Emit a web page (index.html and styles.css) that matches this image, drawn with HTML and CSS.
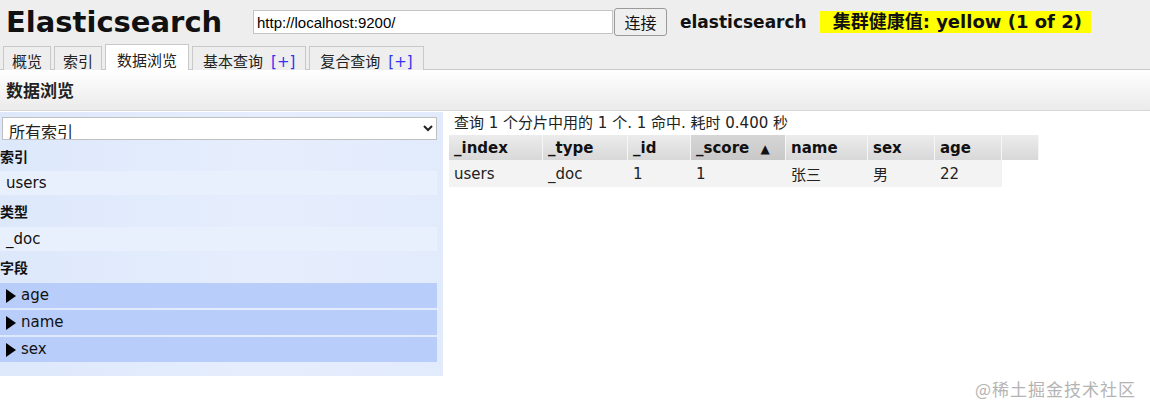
FILE: index.html
```html
<!DOCTYPE html>
<html lang="zh">
<head>
<meta charset="utf-8">
<title>Elasticsearch</title>
<link rel="stylesheet" href="styles.css">
</head>
<body>
<div class="header">
  <div class="top">
    <h1 class="logo">Elasticsearch</h1>
    <input class="url" type="text" value="http://localhost:9200/">
    <button class="connect">连接</button>
    <span class="cluster">elasticsearch</span>
    <span class="health">集群健康值: yellow (1 of 2)</span>
  </div>
  <div class="tabs">
    <div class="tab">概览</div>
    <div class="tab">索引</div>
    <div class="tab active">数据浏览</div>
    <div class="tab wide">基本查询<span class="plus">[+]</span></div>
    <div class="tab wide">复合查询<span class="plus">[+]</span></div>
  </div>
</div>
<div class="infobar">数据浏览</div>
<div class="main">
  <div class="side">
    <select class="idxsel"><option>所有索引</option></select>
    <div class="label">索引</div>
    <div class="row">users</div>
    <div class="label">类型</div>
    <div class="row">_doc</div>
    <div class="label">字段</div>
    <div class="field"><span class="tri"></span>age</div>
    <div class="field"><span class="tri"></span>name</div>
    <div class="field"><span class="tri"></span>sex</div>
  </div>
  <div class="results">
    <div class="summary">查询 1 个分片中用的 1 个. 1 命中. 耗时 0.400 秒</div>
    <table class="grid">
      <thead>
        <tr>
          <th class="c-index">_index</th>
          <th class="c-type">_type</th>
          <th class="c-id">_id</th>
          <th class="c-score sorted">_score <span class="arrow">▲</span></th>
          <th class="c-name">name</th>
          <th class="c-sex">sex</th>
          <th class="c-age">age</th>
          <th class="c-extra"></th>
        </tr>
      </thead>
      <tbody>
        <tr>
          <td>users</td>
          <td>_doc</td>
          <td>1</td>
          <td>1</td>
          <td>张三</td>
          <td>男</td>
          <td>22</td>
          <td class="blank"></td>
        </tr>
      </tbody>
    </table>
  </div>
</div>
<div class="watermark">@稀土掘金技术社区</div>
</body>
</html>
```

FILE: styles.css
```css
html, body {
  margin: 0;
  padding: 0;
  background: #fff;
}
body {
  font-family: "DejaVu Sans", "Noto Sans CJK SC", sans-serif;
  font-size: 15px;
  color: #111;
  position: relative;
  min-height: 413px;
}
.header {
  background: #eeeeee;
  border-bottom: 1px solid #c8c8c8;
}
.top {
  height: 44px;
  display: flex;
  align-items: center;
  padding-left: 6px;
}
.logo {
  margin: 0;
  font-size: 29px;
  font-weight: bold;
  width: 247px;
  letter-spacing: 0;
  line-height: 1;
  padding-top: 1px;
}
.url {
  width: 360px;
  height: 24px;
  box-sizing: border-box;
  border: 1px solid #c4c4c4;
  padding: 0 3px;
  font-family: "Liberation Sans", "Noto Sans CJK SC", sans-serif;
  font-size: 15px;
  color: #000;
  background: #fff;
  margin: 0;
}
.connect {
  height: 28px;
  width: 53px;
  margin: 0 0 0 1px;
  border: 1px solid #9a9a9a;
  border-radius: 3px;
  background: #efefef;
  font-family: "Noto Sans CJK SC", sans-serif;
  font-size: 16px;
  color: #111;
  padding: 0;
}
.cluster {
  margin-left: 13px;
  font-weight: bold;
  font-size: 17px;
}
.health {
  margin-left: 13px;
  background: #ffff00;
  font-weight: bold;
  font-size: 18px;
  padding: 0 13px 0 13px;
  height: 22px;
  line-height: 22px;
  width: 245px;
  white-space: nowrap;
}
.tabs {
  display: flex;
  padding-left: 3px;
  gap: 3px;
  height: 25px;
  align-items: flex-end;
}
.tab {
  height: 24px;
  box-sizing: border-box;
  border: 1px solid #c8c8c8;
  border-bottom: none;
  background: #eeeeee;
  padding: 3px 8px 0 8px;
  font-family: "Noto Sans CJK SC", sans-serif;
  font-size: 15px;
  line-height: 21px;
  color: #222;
  margin-bottom: -1px;
  white-space: nowrap;
}
.tab.active {
  background: #fff;
  height: 26px;
  padding: 4px 11px 0 11px;
  position: relative;
}
.tab.wide {
  padding-left: 10px;
  padding-right: 10px;
}
.plus {
  color: #3333ee;
  font-family: "DejaVu Sans", sans-serif;
  font-size: 15px;
  margin-left: 8px;
}
.infobar {
  height: 40px;
  line-height: 40px;
  padding-left: 6px;
  background: linear-gradient(#ffffff, #ebebeb);
  border-bottom: 1px solid #d8d8d8;
  font-family: "Noto Sans CJK SC", sans-serif;
  font-weight: bold;
  font-size: 17px;
  color: #222;
}
.main {
  display: flex;
  margin-top: 1px;
}
.side {
  width: 443px;
  flex: none;
  box-sizing: border-box;
  padding: 5px 6px 12px 0;
  background: linear-gradient(90deg, #dde8fb, #e6eefd 60%, #e2ebfc);
}
.idxsel {
  display: block;
  width: 435px;
  height: 23px;
  margin-left: 2px;
  border: 1px solid #c0c0c0;
  background: #fff;
  font-family: "Noto Sans CJK SC", sans-serif;
  font-size: 16px;
  line-height: 21px;
  color: #222;
  padding: 0 0 0 2px;
}
.label {
  height: 32px;
  line-height: 33px;
  font-family: "Noto Sans CJK SC", sans-serif;
  font-weight: bold;
  font-size: 14px;
  color: #111;
}
.label:first-of-type {
  height: 31px;
}
.row {
  height: 24px;
  line-height: 24px;
  padding-left: 6px;
  background: #e9f0fd;
}
.field {
  height: 25px;
  line-height: 25px;
  margin-bottom: 2px;
  background: #b8cdfa;
  padding-left: 6px;
  display: flex;
  align-items: center;
}
.tri {
  width: 0;
  height: 0;
  border-top: 7px solid transparent;
  border-bottom: 7px solid transparent;
  border-left: 10px solid #000;
  margin-right: 5px;
}
.results {
  flex: 1;
  padding-left: 6px;
}
.summary {
  height: 23px;
  line-height: 22px;
  padding-left: 5px;
  font-size: 15px;
  color: #222;
}
.grid {
  border-collapse: separate;
  border-spacing: 0;
}
.grid th {
  height: 25px;
  box-sizing: border-box;
  text-align: left;
  padding: 0 0 0 5px;
  font-weight: bold;
  font-size: 15px;
  color: #111;
  background: linear-gradient(#ececec, #d8d8d8);
  border-right: 1px solid #f6f6f6;
  white-space: nowrap;
}
.grid th.sorted {
  background: linear-gradient(#d6d6d6, #c8c8c8);
}
.arrow {
  font-size: 12px;
  margin-left: 6px;
}
.grid td {
  height: 27px;
  padding: 0 0 0 5px;
  background: #f3f3f3;
  font-size: 15px;
  color: #222;
  font-family: "DejaVu Sans", "Noto Sans CJK SC", sans-serif;
}
.grid td.blank {
  background: transparent;
}
.c-index { width: 94px; }
.c-type { width: 85px; }
.c-id { width: 63px; }
.c-score { width: 95px; }
.c-name { width: 82px; }
.c-sex { width: 67px; }
.c-age { width: 67px; }
.c-extra { width: 37px; }
.watermark {
  position: absolute;
  left: 975px;
  top: 376px;
  font-family: "Noto Sans CJK SC", sans-serif;
  font-size: 17px;
  color: #b4b4b4;
  letter-spacing: 1px;
}
```
